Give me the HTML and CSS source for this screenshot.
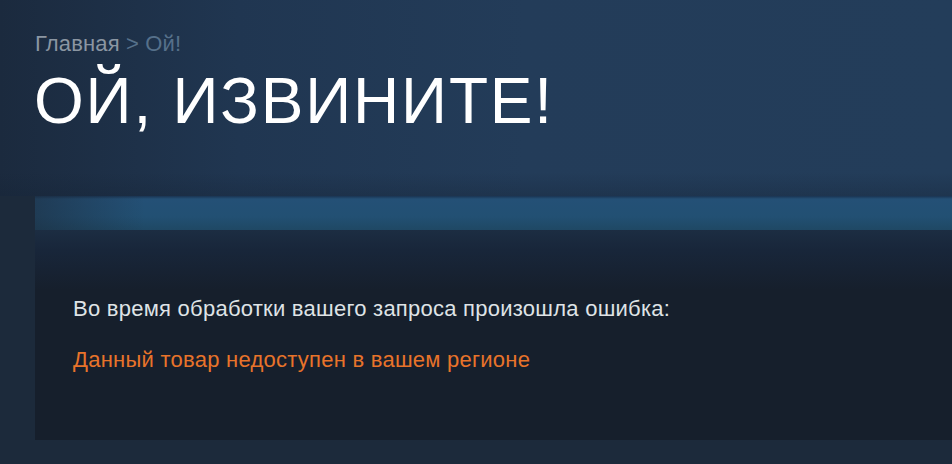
FILE: index.html
```html
<!DOCTYPE html>
<html lang="ru">
<head>
<meta charset="utf-8">
<title>Ой!</title>
<link rel="stylesheet" href="styles.css">
</head>
<body>
<header class="page-head">
  <div class="crumbs"><a class="crumb-link" href="#">Главная</a> <span class="crumb-sep">&gt;</span> <span class="crumb-current">Ой!</span></div>
  <h1 class="page-title">ОЙ, ИЗВИНИТЕ!</h1>
</header>
<main class="content">
  <div class="content-band"></div>
  <section class="error-box">
    <p class="error-lead">Во время обработки вашего запроса произошла ошибка:</p>
    <p class="error-text">Данный товар недоступен в вашем регионе</p>
  </section>
</main>
</body>
</html>
```
FILE: styles.css
```css
html, body {
  margin: 0;
  padding: 0;
}

body {
  background: #1c2a3b;
  font-family: "Liberation Sans", Arial, sans-serif;
  width: 952px;
  height: 464px;
  overflow: hidden;
}

/* header strip with breadcrumbs and title */
.page-head {
  height: 196px;
  box-sizing: border-box;
  padding: 31px 0 0 35px;
  background:
    linear-gradient(to bottom, rgba(20, 34, 52, 0) 88%, rgba(20, 34, 52, 0.3) 100%),
    linear-gradient(to right, #1b2a3e 0%, #203651 25%, #233c59 55%, #233d5a 100%);
}

.crumbs {
  font-size: 22px;
  line-height: 26px;
  letter-spacing: 0.15px;
  color: #56708a;
}

.crumb-link {
  color: #8b96a2;
  text-decoration: none;
}

.page-title {
  margin: 7px 0 0 -1px;
  font-weight: normal;
  font-size: 64px;
  line-height: 74px;
  color: #ffffff;
  letter-spacing: 1.8px;
}

/* content column */
.content {
  margin-left: 35px;
}

.content-band {
  height: 34px;
  background:
    linear-gradient(to right, rgba(28, 42, 59, 0.55) 0%, rgba(28, 42, 59, 0) 12%),
    linear-gradient(to bottom, #1a3452 0px, #245076 3px, #225073 60%, #1f4864 100%);
}

.error-box {
  height: 210px;
  box-sizing: border-box;
  padding: 67px 0 0 38px;
  background: linear-gradient(to bottom, #1c2d42 0px, #18263a 20px, #161f2c 60px, #161f2c 100%);
}

.error-box p {
  margin: 0;
  font-size: 22px;
  line-height: 24px;
  letter-spacing: 0.25px;
}

.error-lead {
  color: #dfe3e6;
}

.error-text {
  margin-top: 27px !important;
  color: #e8732a;
}
```
